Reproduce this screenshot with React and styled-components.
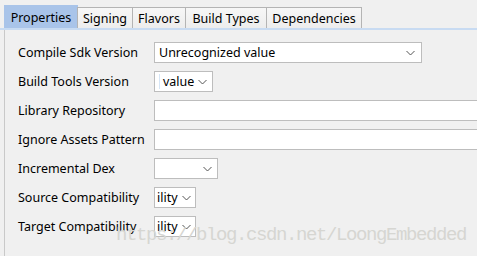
import React from "react";
import styled, { createGlobalStyle } from "styled-components";

const Global = createGlobalStyle`
  html, body { margin: 0; padding: 0; background: #f0f0f0; overflow: hidden; }
  body { font-family: "Noto Sans", "Open Sans", sans-serif; font-size: 12.5px; color: #000; }
`;

const Page = styled.div`
  position: relative;
  width: 477px;
  height: 256px;
  background: #f0f0f0;
  overflow: hidden;
`;

const TabBar = styled.div`
  display: flex;
  align-items: flex-end;
  padding: 5px 0 0 4px;
  height: 23px;
`;

const Tab = styled.div`
  box-sizing: border-box;
  height: ${(p) => (p.$active ? 23 : 21)}px;
  display: flex;
  align-items: center;
  justify-content: center;
  width: ${(p) => p.$w}px;
  background: ${(p) => (p.$active ? "#a9c4e9" : "linear-gradient(#f7f7f7, #ededed)")};
  border: 1px solid ${(p) => (p.$active ? "#a9c4e9" : "#b4b4b4")};
  border-bottom: none;
  margin-left: ${(p) => (p.$first ? 0 : -1)}px;
  font-size: 12.5px;
  white-space: nowrap;
  padding-top: ${(p) => (p.$active ? 0 : 1)}px;
`;

const BlueLine = styled.div`
  height: 2px;
  background: #c8dbf2;
`;

const Panel = styled.div`
  margin-left: 4px;
  border-left: 1px solid #c9c9c9;
  height: 226px;
  padding: 12px 0 0 13px;
  box-sizing: border-box;
`;

const Form = styled.div`
  display: grid;
  grid-template-columns: 136px 1fr;
  row-gap: 8px;
  align-items: center;
`;

const Label = styled.div`
  font-size: 12.5px;
  white-space: nowrap;
  line-height: 21px;
`;

const Box = styled.div`
  box-sizing: border-box;
  height: 21px;
  background: #fff;
  border: 1px solid #bdbdbd;
  width: ${(p) => p.$w}px;
  display: flex;
  align-items: center;
  padding-left: ${(p) => p.$pl ?? 4}px;
  font-size: 12.5px;
  white-space: nowrap;
  overflow: hidden;
`;

const Value = styled.span`
  flex: 1;
  min-width: 0;
  line-height: 19px;
`;

const Caret = styled.span`
  width: 1px;
  height: 15px;
  background: #d6e6f7;
  margin-right: 3px;
`;

const Chevron = styled.svg`
  flex: none;
  margin-right: ${(p) => p.$mr}px;
`;

const Watermark = styled.div`
  position: absolute;
  left: 116px;
  top: 224px;
  font-family: "Liberation Mono", monospace;
  font-size: 19px;
  letter-spacing: -1.4px;
  color: #d6d6d2;
  white-space: nowrap;
  pointer-events: none;
`;

const Down = ({ mr }) => (
  <Chevron $mr={mr} width="9" height="6" viewBox="0 0 9 6">
    <path d="M0.5 1 L4.5 5 L8.5 1" fill="none" stroke="#555" strokeWidth="1" />
  </Chevron>
);

const Combo = ({ w, text, pl, mr, caret }) => (
  <Box $w={w} $pl={pl}>
    {caret && <Caret />}
    <Value>{text}</Value>
    <Down mr={mr} />
  </Box>
);

export default function App() {
  return (
    <Page>
      <Global />
      <TabBar>
        <Tab $active $first $w={74}>Properties</Tab>
        <Tab $w={56}>Signing</Tab>
        <Tab $w={54}>Flavors</Tab>
        <Tab $w={82}>Build Types</Tab>
        <Tab $w={96}>Dependencies</Tab>
      </TabBar>
      <BlueLine />
      <Panel>
        <Form>
          <Label>Compile Sdk Version</Label>
          <Combo w={268} text="Unrecognized value" mr={6} />
          <Label>Build Tools Version</Label>
          <Combo w={59} text="value" caret pl={4} mr={5} />
          <Label>Library Repository</Label>
          <Box $w={340} />
          <Label>Ignore Assets Pattern</Label>
          <Box $w={340} />
          <Label>Incremental Dex</Label>
          <Combo w={64} text="" mr={5} />
          <Label>Source Compatibility</Label>
          <Combo w={42} text="ility" pl={2} mr={4} />
          <Label>Target Compatibility</Label>
          <Combo w={42} text="ility" pl={2} mr={4} />
        </Form>
      </Panel>
      <Watermark>https://blog.csdn.net/LoongEmbedded</Watermark>
    </Page>
  );
}
